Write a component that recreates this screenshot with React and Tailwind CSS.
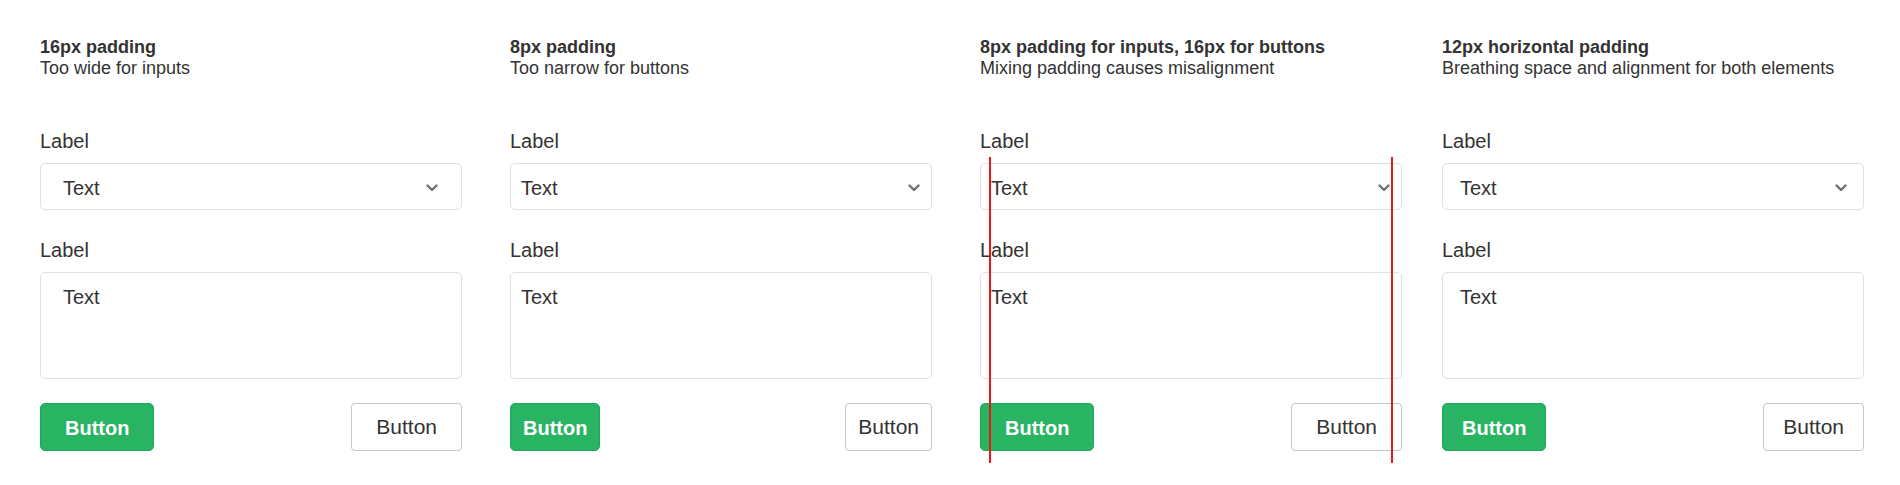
import React from "react";

const font = { fontFamily: '"Liberation Sans", Arial, sans-serif' };

function Chevron({ className }) {
  return (
    <svg className={className} width="12" height="8" viewBox="0 0 12 8" fill="none">
      <path d="M1.5 1.5 L6 6 L10.5 1.5" stroke="#6f6f6f" strokeWidth="2.4" strokeLinecap="round" strokeLinejoin="round" />
    </svg>
  );
}

function Column({ title, subtitle, padClass, primaryClass, secondaryClass, className, lines }) {
  return (
    <div className={"relative flex w-[422px] shrink-0 flex-col " + (className || "")}>
      <div className="text-[18px] font-bold leading-[21px] text-[#333]">{title}</div>
      <div className="text-[18px] leading-[21px] text-[#333]">{subtitle}</div>

      <div className="mt-[50px] text-[20px] leading-[24px] text-[#333]">Label</div>
      <div className={"mt-[10px] flex h-[47px] items-center justify-between rounded-[5px] border border-[#e0e0e0] bg-white pt-[2px] text-[20px] text-[#333] " + padClass}>
        <span>Text</span>
        <Chevron />
      </div>

      <div className="mt-[28px] text-[20px] leading-[24px] text-[#333]">Label</div>
      <div className={"mt-[10px] h-[107px] rounded-[5px] border border-[#e0e0e0] bg-white pt-[12px] text-[20px] leading-[24px] text-[#333] " + padClass}>
        Text
      </div>

      <div className="mt-[24px] flex items-center justify-between">
        <button className={"flex h-[48px] items-center rounded-[5px] border border-[#22a65a] bg-[#28b463] pt-[1px] text-[20px] font-bold text-white " + primaryClass}>
          Button
        </button>
        <button className={"flex h-[48px] items-center rounded-[4px] border border-[#c6c6c6] bg-white text-[21px] text-[#333] " + secondaryClass}>
          Button
        </button>
      </div>

      {lines && (
        <>
          <div className="absolute left-[9px] top-[120px] h-[306px] w-[2px] bg-[#f01414]" />
          <div className="absolute left-[411px] top-[120px] h-[306px] w-[2px] bg-[#f01414]" />
        </>
      )}
    </div>
  );
}

export default function App() {
  return (
    <div className="h-[485px] w-full bg-white" style={font}>
      <div className="flex pl-[40px] pt-[37px]">
        <Column
          title="16px padding"
          subtitle="Too wide for inputs"
          padClass="pl-[22px] pr-[23px]"
          primaryClass="px-[24px]"
          secondaryClass="px-[24px]"
        />
        <Column
          className="ml-[48px]"
          title="8px padding"
          subtitle="Too narrow for buttons"
          padClass="pl-[10px] pr-[11px]"
          primaryClass="px-[12px]"
          secondaryClass="px-[12px]"
        />
        <Column
          className="ml-[48px]"
          title="8px padding for inputs, 16px for buttons"
          subtitle="Mixing padding causes misalignment"
          padClass="pl-[10px] pr-[11px]"
          primaryClass="px-[24px]"
          secondaryClass="px-[24px]"
          lines
        />
        <Column
          className="ml-[40px]"
          title="12px horizontal padding"
          subtitle="Breathing space and alignment for both elements"
          padClass="pl-[17px] pr-[16px]"
          primaryClass="px-[19px]"
          secondaryClass="px-[19px]"
        />
      </div>
    </div>
  );
}
